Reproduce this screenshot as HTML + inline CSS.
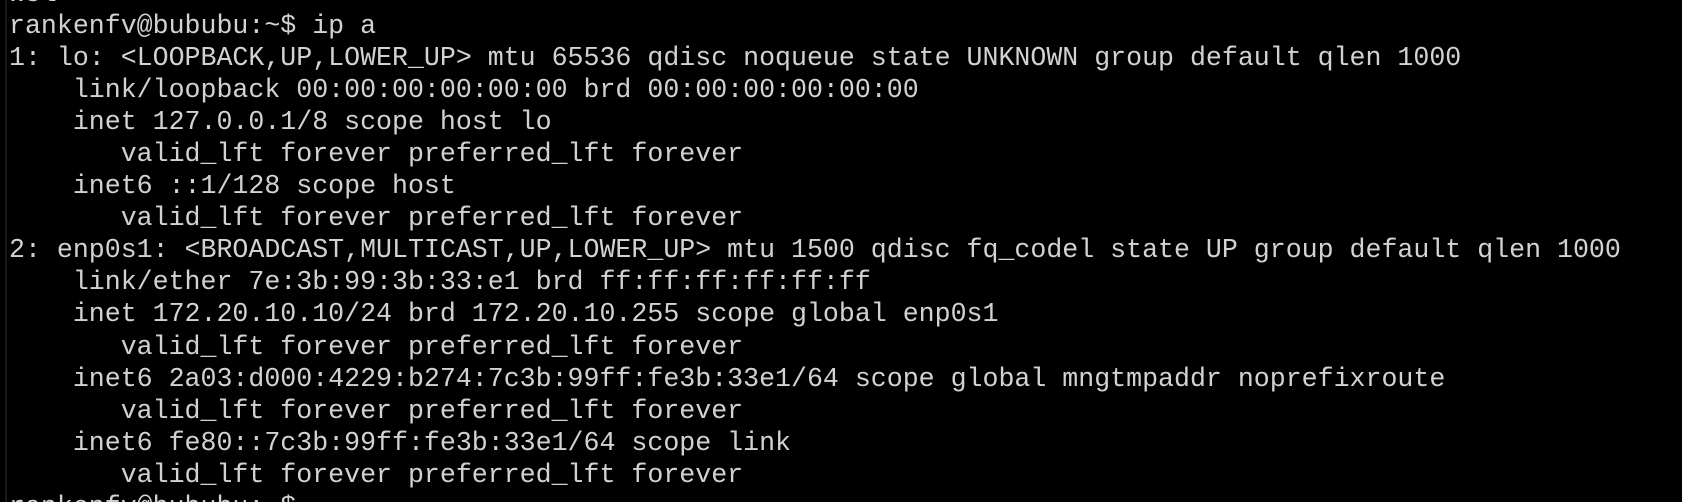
<!DOCTYPE html>
<html><head><meta charset="utf-8"><style>
html,body{margin:0;padding:0;background:#000;width:1682px;height:502px;overflow:hidden;position:relative}
pre{position:absolute;left:9px;top:-22.5px;margin:0;font-family:"Liberation Mono",monospace;font-size:26.6px;line-height:32.1px;color:#d2d2d2;white-space:pre}
.bar{position:absolute;left:5px;top:0;width:2px;height:502px;background:#1a1a1a}
</style></head><body>
<div class="bar"></div>
<pre>wsl
rankenfv@bububu:~$ ip a
1: lo: &lt;LOOPBACK,UP,LOWER_UP&gt; mtu 65536 qdisc noqueue state UNKNOWN group default qlen 1000
    link/loopback 00:00:00:00:00:00 brd 00:00:00:00:00:00
    inet 127.0.0.1/8 scope host lo
       valid_lft forever preferred_lft forever
    inet6 ::1/128 scope host
       valid_lft forever preferred_lft forever
2: enp0s1: &lt;BROADCAST,MULTICAST,UP,LOWER_UP&gt; mtu 1500 qdisc fq_codel state UP group default qlen 1000
    link/ether 7e:3b:99:3b:33:e1 brd ff:ff:ff:ff:ff:ff
    inet 172.20.10.10/24 brd 172.20.10.255 scope global enp0s1
       valid_lft forever preferred_lft forever
    inet6 2a03:d000:4229:b274:7c3b:99ff:fe3b:33e1/64 scope global mngtmpaddr noprefixroute
       valid_lft forever preferred_lft forever
    inet6 fe80::7c3b:99ff:fe3b:33e1/64 scope link
       valid_lft forever preferred_lft forever
rankenfv@bububu:~$</pre>
</body></html>
